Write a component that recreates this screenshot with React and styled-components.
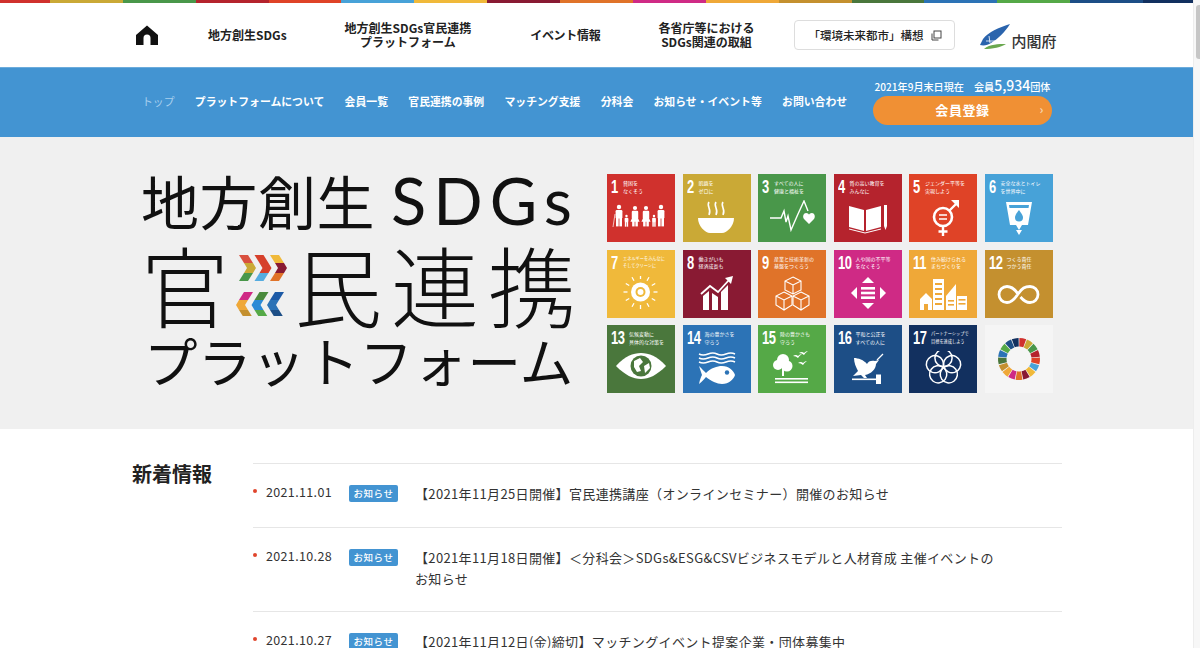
import React from 'react';
import styled, { createGlobalStyle } from 'styled-components';

const JP = '"Noto Sans CJK JP", "Noto Sans", sans-serif';

const GlobalStyle = createGlobalStyle`
  html, body {
    margin: 0;
    padding: 0;
    height: 648px;
    overflow: hidden;
    background: #fff;
    font-family: ${JP};
    color: #222;
  }
`;

const Shell = styled.div`
  display: flex;
  width: 1200px;
  height: 648px;
  overflow: hidden;
`;

const Page = styled.div`
  width: 1193px;
  flex: none;
`;

const ScrollTrack = styled.div`
  flex: 1;
  background: #f7f7f7;
  border-left: 1px solid #ededed;
  display: flex;
  justify-content: flex-end;
  padding-top: 5px;
`;

const ScrollThumb = styled.div`
  width: 4px;
  height: 54px;
  background: #c6c6c6;
  border-radius: 3px 0 0 3px;
`;

const ColorStrip = styled.div`
  display: flex;
  height: 3px;
`;

const StripCell = styled.div`
  flex: ${({ $edge }) => ($edge ? '50' : '73')} 1 0;
  background: ${({ $color }) => $color};
`;

const Header = styled.header`
  display: flex;
  align-items: center;
  height: 64px;
  padding-left: 136px;
`;

const HomeLink = styled.a`
  display: flex;
  width: 22px;
  height: 22px;
`;

const HeaderLink = styled.a`
  margin-left: ${({ $gap }) => $gap}px;
  font-size: 12px;
  line-height: 14px;
  font-weight: 700;
  text-align: center;
  color: #222;
  white-space: nowrap;
  letter-spacing: ${({ $spacing }) => $spacing || 0}px;
`;

const ExternalButton = styled.a`
  display: flex;
  align-items: center;
  justify-content: space-between;
  box-sizing: border-box;
  margin-left: 40px;
  width: 161px;
  height: 30px;
  padding: 0 12px 0 13px;
  border: 1px solid #ddd;
  border-radius: 4px;
  font-size: 11.5px;
  font-weight: 500;
  white-space: nowrap;
`;

const CabinetLogo = styled.a`
  display: flex;
  align-items: flex-end;
  margin-left: 25px;
  height: 26px;
  padding-top: 2px;
`;

const CabinetName = styled.span`
  font-size: 15px;
  line-height: 16px;
  color: #333;
  font-weight: 500;
  white-space: nowrap;
`;

const SubNav = styled.nav`
  display: flex;
  align-items: center;
  height: 70px;
  background: #4394d2;
  padding: 0 0 3px 142px;
  border-top: 1px solid #6cacdc;
  box-sizing: border-box;
`;

const SubNavList = styled.div`
  display: flex;
  gap: 20.3px;
  width: 731px;
  flex: none;
`;

const SubNavItem = styled.a`
  font-size: 10.85px;
  line-height: 14px;
  color: ${({ $current }) => ($current ? '#a9d0ee' : '#fff')};
  font-weight: ${({ $current }) => ($current ? 400 : 700)};
  white-space: nowrap;
`;

const MemberBox = styled.div`
  display: flex;
  flex-direction: column;
  align-items: center;
  width: 179px;
  flex: none;
`;

const MemberStatus = styled.div`
  font-size: 10.1px;
  line-height: 16px;
  font-weight: 500;
  color: #fff;
  white-space: pre;
`;

const MemberCount = styled.span`
  font-size: 14px;
  font-weight: 500;
`;

const JoinButton = styled.a`
  display: flex;
  align-items: center;
  justify-content: center;
  position: relative;
  width: 179px;
  height: 29px;
  margin-top: 1px;
  padding-bottom: 3px;
  box-sizing: border-box;
  background: #f09034;
  border-radius: 15px;
  color: #fff;
  font-size: 13px;
  font-weight: 700;
  letter-spacing: 0.6px;
`;

const JoinArrow = styled.span`
  position: absolute;
  right: 8px;
  top: 5px;
  font-size: 12px;
  line-height: 16px;
  color: #f7d5b0;
`;

const Hero = styled.section`
  display: flex;
  align-items: center;
  height: 292px;
  box-sizing: border-box;
  padding: 1px 0 0 141px;
  background: #f0f0f0;
`;

const HeroTitle = styled.h1`
  display: flex;
  flex-direction: column;
  width: 466px;
  flex: none;
  margin: 0;
  font-weight: 400;
  color: #111;
`;

const TitleRowOne = styled.div`
  display: flex;
  align-items: center;
  height: 60px;
  margin: -6px 0 4px;
  font-size: 58px;
  line-height: 60px;
  letter-spacing: 0.5px;
  font-weight: 400;
  white-space: nowrap;
`;

const TitleLatin = styled.span`
  font-family: Lato, sans-serif;
  font-weight: 400;
  font-size: 65px;
  margin-left: 16px;
  letter-spacing: 7px;
`;

const TitleRowTwo = styled.div`
  display: flex;
  align-items: center;
  height: 98px;
  font-size: 88px;
  line-height: 98px;
  font-weight: 300;
  white-space: nowrap;
`;

const TitleKanji = styled.span`
  letter-spacing: ${({ $spacing }) => $spacing}px;
`;

const ArrowMark = styled.svg`
  width: 52px;
  height: 66px;
  margin: 0 6px 0 7px;
  flex: none;
`;

const TitleRowThree = styled.div`
  height: 64px;
  margin-top: -4px;
  padding-left: 3px;
  font-size: 53.5px;
  line-height: 64px;
  letter-spacing: 0.4px;
  font-weight: 400;
  white-space: nowrap;
`;

const GoalGrid = styled.div`
  display: grid;
  grid-template-columns: repeat(6, 68px);
  grid-auto-rows: 68px;
  gap: 7.5px;
`;

const GoalTile = styled.div`
  display: flex;
  flex-direction: column;
  overflow: hidden;
  background: ${({ $color }) => $color};
  color: #fff;
`;

const GoalHead = styled.div`
  display: flex;
  height: 26px;
  padding: 4px 0 0 4px;
  box-sizing: border-box;
`;

const GoalNumber = styled.div`
  font-family: "Liberation Sans", sans-serif;
  font-weight: 700;
  font-size: 18px;
  line-height: 19px;
  transform: scaleX(0.72);
  transform-origin: left top;
  width: ${({ $wide }) => ($wide ? 15 : 9)}px;
  margin-right: 3px;
  letter-spacing: -0.5px;
`;

const GoalCaption = styled.div`
  font-size: ${({ $tight }) => ($tight ? 4.2 : 5)}px;
  line-height: 7.5px;
  padding-top: 1px;
  white-space: pre;
`;

const GoalIcon = styled.svg`
  display: block;
  width: 68px;
  height: 42px;
`;

const WheelTile = styled.div`
  background: #f5f5f5;
`;

const News = styled.section`
  display: flex;
  padding: 34px 0 0 132px;
`;

const NewsHeading = styled.h2`
  width: 121px;
  flex: none;
  margin: -1px 0 0;
  font-size: 20px;
  line-height: 24px;
  font-weight: 700;
  color: #222;
`;

const NewsList = styled.div`
  width: 809px;
  border-top: 1px solid #e6e6e6;
`;

const NewsRow = styled.article`
  display: flex;
  box-sizing: border-box;
  min-height: 64px;
  padding: 19px 0 22px;
  border-bottom: 1px solid #e6e6e6;
`;

const NewsDate = styled.time`
  position: relative;
  width: 96px;
  flex: none;
  padding-left: 13px;
  box-sizing: border-box;
  font-size: 12.5px;
  line-height: 16px;
  margin-top: 1px;
  letter-spacing: 0.35px;
  color: #333;

  &::before {
    content: '';
    position: absolute;
    left: 0;
    top: 5px;
    width: 4px;
    height: 4px;
    border-radius: 50%;
    background: #e0452c;
  }
`;

const NewsTag = styled.span`
  width: 49px;
  height: 17px;
  flex: none;
  margin: 2px 17px 0 0;
  background: #4394d2;
  border-radius: 2px;
  color: #fff;
  font-size: 9.5px;
  line-height: 17px;
  font-weight: 500;
  text-align: center;
  letter-spacing: 0.5px;
`;

const NewsTitle = styled.a`
  width: 590px;
  font-size: 13px;
  line-height: 21px;
  letter-spacing: 0.35px;
  color: #333;
`;

const stripColors = ['#d0312d', '#caa936', '#49974a', '#b5232d', '#df4327', '#47a2d8', '#f0b93a', '#891a33', '#e07329', '#cf2a85', '#efa838', '#c4902f', '#4a773c', '#2c73b6', '#55a947', '#1d4e86', '#12305f'];

const Person = ({ x, y, h, dress }) => (
  <g>
    <circle cx={x} cy={y} r={h * 0.11} />
    <rect x={x - h * 0.17} y={y + h * 0.15} width={h * 0.34} height={h * 0.42} rx={1.2} />
    {dress ? <path d={`M${x - h * 0.1} ${y + h * 0.4} L${x - h * 0.24} ${y + h * 0.72} H${x + h * 0.24} L${x + h * 0.1} ${y + h * 0.4}Z`} /> : null}
    <rect x={x - h * 0.15} y={y + h * 0.5} width={h * 0.13} height={h * 0.47} />
    <rect x={x + h * 0.02} y={y + h * 0.5} width={h * 0.13} height={h * 0.47} />
  </g>
);

const icons = {
  1: (
    <g fill="#fff">
      <Person x={12} y={33} h={20} />
      <Person x={19.5} y={42} h={11} />
      <Person x={28} y={34} h={19} dress />
      <Person x={39} y={34} h={19} dress />
      <Person x={47} y={42} h={11} />
      <Person x={54} y={33} h={20} />
      <path d="M6 53 L8 40" stroke="#fff" strokeWidth="0.7" />
    </g>
  ),
  2: (
    <g>
      <path d="M15 44 H51 C51 52 44 59 39 59 H27 C22 59 15 52 15 44Z" fill="#fff" />
      <g fill="none" stroke="#fff" strokeWidth="1.6">
        <path d="M26 28 C23 32 29 35 26 41" />
        <path d="M33 28 C30 32 36 35 33 41" />
        <path d="M40 28 C37 32 43 35 40 41" />
      </g>
    </g>
  ),
  3: (
    <g>
      <path d="M12 44 H23 L26 37 L28 48 L30 42 L33 56 L40 40 L46 27 L50 37" fill="none" stroke="#fff" strokeWidth="1.4" />
      <path d="M51 50 L46 45 C44 42 46 39 48 39 C50 39 51 40 51 41 C51 40 52 39 54 39 C56 39 58 42 56 45Z" fill="#fff" />
    </g>
  ),
  4: (
    <g fill="#fff">
      <path d="M15 32 L30 36 V57 L15 53Z" />
      <path d="M47 32 L32 36 V57 L47 53Z" />
      <path d="M15 55 L31 59 L47 55" fill="none" stroke="#fff" strokeWidth="1" />
      <path d="M50 31 H53 V52 L51.5 56 L50 52Z" />
    </g>
  ),
  5: (
    <g>
      <circle cx="34" cy="43" r="9" fill="none" stroke="#fff" strokeWidth="2.6" />
      <path d="M30 41 H38 M30 45 H38" stroke="#fff" strokeWidth="1.6" />
      <path d="M34 53 V62 M29.5 57.5 H38.5 M40.5 36.5 L49 28" stroke="#fff" strokeWidth="2.4" />
      <path d="M42 26 H50 V34Z" fill="#fff" />
    </g>
  ),
  6: (
    <g>
      <path d="M21 28 H47 L43 51 H37 L34 56 L31 51 H25Z" fill="#fff" />
      <path d="M24 31 H44 L43.5 34 H24.5Z" fill="#47a2d8" />
      <path d="M34 36 C37 40 38 42 38 43.5 A4 4 0 0 1 30 43.5 C30 42 31 40 34 36Z" fill="#47a2d8" />
      <path d="M31 56 H37 L34 61Z" fill="#fff" />
    </g>
  ),
  7: (
    <g>
      <circle cx="33.5" cy="42" r="9.5" fill="#fff" />
      <circle cx="33.5" cy="42" r="5" fill="#f0b93a" />
      <circle cx="33.5" cy="42" r="3" fill="#fff" />
      <g stroke="#fff" strokeWidth="1.3">
        {[0, 30, 60, 90, 120, 150, 180, 210, 240, 270, 300, 330].map((a) => (
          <line key={a} x1="33.5" y1="29" x2="33.5" y2="25" transform={`rotate(${a} 33.5 42)`} />
        ))}
      </g>
    </g>
  ),
  8: (
    <g fill="#fff">
      <path d="M20 60 V46 L26 41 V60Z" />
      <path d="M29 60 V43 L35 47 V60Z" />
      <path d="M38 60 V42 L45 35 V60Z" />
      <path d="M18 44 L27 36 L35 42 L46 30" fill="none" stroke="#fff" strokeWidth="1.8" />
      <path d="M42 28 L50 26 L48 34Z" />
    </g>
  ),
  9: (
    <g fill="none" stroke="#fff" strokeWidth="1.1">
      <path d="M35 27 L43 31 V40 L35 44 L27 40 V31Z M27 31 L35 35 L43 31 M35 35 V44" />
      <path d="M26 42 L34 46 V55 L26 60 L18 55 V46Z M18 46 L26 50 L34 46 M26 50 V60" />
      <path d="M43 42 L51 46 V55 L43 60 L35 55 V46Z M35 46 L43 50 L51 46 M43 50 V60" />
    </g>
  ),
  10: (
    <g fill="#fff">
      <path d="M34 27 L40 33 H28Z" />
      <path d="M34 59 L40 53 H28Z" />
      <path d="M17 43 L23 37 V49Z" />
      <path d="M52 43 L46 37 V49Z" />
      <rect x="27" y="37" width="14" height="2.6" />
      <rect x="27" y="41.7" width="14" height="2.6" />
      <rect x="27" y="46.4" width="14" height="2.6" />
    </g>
  ),
  11: (
    <g fill="#fff">
      <path d="M11 49 L17 43 L23 49 V60 H19 V54 H15 V60 H11Z" />
      <path d="M24 29 H35 V60 H24Z" />
      <path d="M37 60 V46 L47 34 V60Z" />
      <rect x="48" y="46" width="10" height="14" />
      <g fill="#efa838">
        {[33, 38, 43, 48, 53].map((y) => (
          <rect key={y} x="26" y={y} width="7" height="2" />
        ))}
        {[50, 54].map((y) => (
          <rect key={y} x="39" y={y} width="6" height="1.6" />
        ))}
        {[49, 53].map((y) => (
          <rect key={y} x="49.5" y={y} width="7" height="1.6" />
        ))}
      </g>
    </g>
  ),
  12: (
    <path d="M33 44 C29 38 26 36.5 22 36.5 A8 8 0 0 0 22 52.5 C26 52.5 29 50 33 44 C37 38 40 36.5 45 36.5 A8 8 0 0 1 45 52.5 C41 52.5 38 50 35.5 47" fill="none" stroke="#fff" strokeWidth="2.8" />
  ),
  13: (
    <g>
      <path d="M9 41 C18 31 26 28 34 28 C42 28 50 31 59 41 C50 50 42 54 34 54 C26 54 18 50 9 41Z" fill="#fff" />
      <circle cx="34" cy="41" r="10.5" fill="#4a773c" />
      <path d="M27 36 L33 33 L36 37 L32 41 L34 46 L30 47 L27 42Z M37 41 L42 38 L43 43 L38 48Z" fill="#fff" />
    </g>
  ),
  14: (
    <g>
      <g fill="none" stroke="#fff" strokeWidth="1.5">
        <path d="M16 29 Q20 31 25 29 T34 29 T43 29 T52 29" />
        <path d="M16 33 Q20 35 25 33 T34 33 T43 33 T52 33" />
        <path d="M16 37 Q20 39 25 37 T34 37 T43 37 T52 37" />
      </g>
      <path d="M16 41 C19 44 21 46 23 48 C28 43 34 41 39 41 C46 41 51 46 52 50 C51 54 46 59 39 59 C34 59 28 56 23 52 C21 54 19 57 16 59 C17 54 18 52 19 50 C18 47 17 44 16 41Z" fill="#fff" />
      <circle cx="44" cy="47.5" r="2.2" fill="#2c73b6" />
    </g>
  ),
  15: (
    <g fill="#fff">
      <circle cx="25" cy="35" r="6" />
      <circle cx="20" cy="40" r="5" />
      <circle cx="29" cy="41" r="5.5" />
      <rect x="24" y="42" width="2" height="9" />
      <rect x="17" y="53" width="33" height="1.6" />
      <rect x="17" y="56.5" width="33" height="1.6" />
      <path d="M35 31 Q38 29 40 31 Q42 29 44 29 Q41 31 40 33 Q38 31 35 31Z" />
      <path d="M41 28 Q44 26 46 28 Q48 26 50 26 Q47 28 46 30 Q44 28 41 28Z" />
      <path d="M40 38 Q43 36 45 38 Q47 36 49 36 Q46 38 45 40 Q43 38 40 38Z" />
    </g>
  ),
  16: (
    <g fill="#fff">
      <path d="M20 33 C24 33 30 35 33 39 C34 36 38 35 41 36 L45 35 L42 39 C42 44 37 49 31 50 L33 53 H30 L27 50 L19 51 L24 46 C22 42 20 38 20 33Z" />
      <path d="M43 35 Q46 32 49 29" fill="none" stroke="#fff" strokeWidth="1.2" />
      <rect x="18" y="53.5" width="24" height="1.6" />
      <rect x="42" y="49.5" width="5" height="9.5" />
    </g>
  ),
  17: (
    <g fill="none" stroke="#fff" strokeWidth="1.5">
      {[0, 72, 144, 216, 288].map((a) => (
        <circle key={a} cx="34.5" cy="33" r="8.6" transform={`rotate(${a} 34.5 42)`} />
      ))}
    </g>
  ),
};

const goals = [
  [1, '貧困を\nなくそう'],
  [2, '飢餓を\nゼロに'],
  [3, 'すべての人に\n健康と福祉を'],
  [4, '質の高い教育を\nみんなに'],
  [5, 'ジェンダー平等を\n実現しよう'],
  [6, '安全な水とトイレ\nを世界中に'],
  [7, 'エネルギーをみんなに\nそしてクリーンに', true],
  [8, '働きがいも\n経済成長も'],
  [9, '産業と技術革新の\n基盤をつくろう'],
  [10, '人や国の不平等\nをなくそう'],
  [11, '住み続けられる\nまちづくりを'],
  [12, 'つくる責任\nつかう責任'],
  [13, '気候変動に\n具体的な対策を'],
  [14, '海の豊かさを\n守ろう'],
  [15, '陸の豊かさも\n守ろう'],
  [16, '平和と公正を\nすべての人に'],
  [17, 'パートナーシップで\n目標を達成しよう', true],
];

const wheelSegment = (i) => {
  const step = (Math.PI * 2) / 17;
  const a0 = i * step - Math.PI / 2 + 0.02;
  const a1 = a0 + step - 0.04;
  const p = (r, a) => `${(34 + r * Math.cos(a)).toFixed(2)} ${(34 + r * Math.sin(a)).toFixed(2)}`;
  return `M${p(21, a0)} A21 21 0 0 1 ${p(21, a1)} L${p(12.5, a1)} A12.5 12.5 0 0 0 ${p(12.5, a0)}Z`;
};

const news = [
  ['2021.11.01', '【2021年11月25日開催】官民連携講座（オンラインセミナー）開催のお知らせ'],
  ['2021.10.28', '【2021年11月18日開催】＜分科会＞SDGs&ESG&CSVビジネスモデルと人材育成 主催イベントのお知らせ'],
  ['2021.10.27', '【2021年11月12日(金)締切】マッチングイベント提案企業・団体募集中'],
];

const subNavItems = ['プラットフォームについて', '会員一覧', '官民連携の事例', 'マッチング支援', '分科会', 'お知らせ・イベント等', 'お問い合わせ'];

const chevrons = [
  [0, '#d9503f', '#caa936', '#49974a'],
  [15.5, '#d6402b', '#d6402b', '#55ace0'],
  [31, '#f0b93a', '#891a33', '#e07329'],
];

const backChevrons = [
  [0, '#cf2a85', '#efa838', '#c4902f'],
  [15.5, '#4a8a3c', '#2c8ad6', '#55a947'],
  [31, '#1d5aa6', '#2c73b6', '#1d4e86'],
];

const Chevron = ({ x, y, top, mid, bottom, flip }) => (
  <g transform={flip ? `translate(${x + 17} ${y}) scale(-1 1)` : `translate(${x} ${y})`}>
    <path d="M0 0 H9 L14 8 H5Z" fill={top} />
    <path d="M5 8 H14 L17 13 L14 18 H5 L8 13Z" fill={mid} />
    <path d="M5 18 H14 L9 26 H0Z" fill={bottom} />
  </g>
);

export default function App() {
  return (
    <Shell>
      <GlobalStyle />
      <Page>
        <ColorStrip>
          {stripColors.map((c, i) => (
            <StripCell key={c} $color={c} $edge={i === 0 || i === 16} />
          ))}
        </ColorStrip>
        <Header>
          <HomeLink>
            <svg width="22" height="22" viewBox="0 0 22 22">
              <path d="M11 1.5 L22 11 V21 H14.5 V14 A3.5 3.5 0 0 0 7.5 14 V21 H0 V11Z" fill="#111" />
            </svg>
          </HomeLink>
          <HeaderLink $gap={50}>地方創生SDGs</HeaderLink>
          <HeaderLink $gap={58}>
            地方創生SDGs官民連携
            <br />
            プラットフォーム
          </HeaderLink>
          <HeaderLink $gap={59} $spacing={-0.3}>イベント情報</HeaderLink>
          <HeaderLink $gap={58}>
            各省庁等における
            <br />
            SDGs関連の取組
          </HeaderLink>
          <ExternalButton>
            「環境未来都市」構想
            <svg width="11" height="11" viewBox="0 0 11 11" fill="none" stroke="#444" strokeWidth="1">
              <rect x="3" y="1" width="7" height="7" />
              <path d="M1 3.5 V10 H7.5" />
            </svg>
          </ExternalButton>
          <CabinetLogo>
            <svg width="31" height="25" viewBox="0 0 31 25">
              <path d="M30 0 C20 3 8 8 3 15 C2 17 1 19 0 21 C4 22 8 21 11 19 C18 15 25 8 30 0Z" fill="#2a64ad" />
              <path d="M4 25 C10 20 18 20 26 20 C22 23 12 25 4 25Z" fill="#6aa84f" />
              <path d="M9 12 L10 19 M6 17 H15" stroke="#fff" strokeWidth="0.8" />
            </svg>
            <CabinetName>内閣府</CabinetName>
          </CabinetLogo>
        </Header>
        <SubNav>
          <SubNavList>
            <SubNavItem $current>トップ</SubNavItem>
            {subNavItems.map((label) => (
              <SubNavItem key={label}>{label}</SubNavItem>
            ))}
          </SubNavList>
          <MemberBox>
            <MemberStatus>
              2021年9月末日現在　会員<MemberCount>5,934</MemberCount>団体
            </MemberStatus>
            <JoinButton>
              会員登録
              <JoinArrow>›</JoinArrow>
            </JoinButton>
          </MemberBox>
        </SubNav>
        <Hero>
          <HeroTitle>
            <TitleRowOne>
              地方創生<TitleLatin>SDGs</TitleLatin>
            </TitleRowOne>
            <TitleRowTwo>
              <TitleKanji $spacing={0}>官</TitleKanji>
              <ArrowMark viewBox="0 0 52 66">
                {chevrons.map(([x, a, b, c]) => (
                  <Chevron key={x} x={x + 3} y={5} top={a} mid={b} bottom={c} />
                ))}
                {backChevrons.map(([x, a, b, c]) => (
                  <Chevron key={x} x={x} y={42} top={a} mid={b} bottom={c} flip />
                ))}
              </ArrowMark>
              <TitleKanji $spacing={9}>民連携</TitleKanji>
            </TitleRowTwo>
            <TitleRowThree>プラットフォーム</TitleRowThree>
          </HeroTitle>
          <GoalGrid>
            {goals.map(([n, caption, tight]) => (
              <GoalTile key={n} $color={stripColors[n - 1]}>
                <GoalHead>
                  <GoalNumber $wide={n > 9}>{n}</GoalNumber>
                  <GoalCaption $tight={tight}>{caption}</GoalCaption>
                </GoalHead>
                <GoalIcon viewBox="0 26 68 42">{icons[n]}</GoalIcon>
              </GoalTile>
            ))}
            <WheelTile>
              <svg width="68" height="68" viewBox="0 0 68 68">
                {stripColors.map((c, i) => (
                  <path key={c} d={wheelSegment(i)} fill={c} />
                ))}
              </svg>
            </WheelTile>
          </GoalGrid>
        </Hero>
        <News>
          <NewsHeading>新着情報</NewsHeading>
          <NewsList>
            {news.map(([date, title]) => (
              <NewsRow key={date}>
                <NewsDate>{date}</NewsDate>
                <NewsTag>お知らせ</NewsTag>
                <NewsTitle>{title}</NewsTitle>
              </NewsRow>
            ))}
          </NewsList>
        </News>
      </Page>
      <ScrollTrack>
        <ScrollThumb />
      </ScrollTrack>
    </Shell>
  );
}
